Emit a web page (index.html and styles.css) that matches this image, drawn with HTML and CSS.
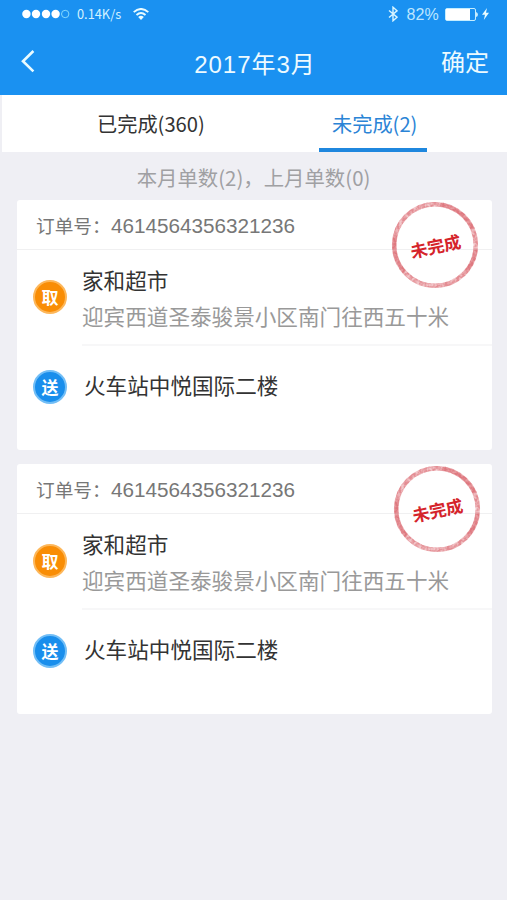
FILE: index.html
```html
<!DOCTYPE html>
<html lang="zh-CN">
<head>
<meta charset="utf-8">
<title>2017年3月</title>
<link rel="stylesheet" href="styles.css">
</head>
<body>
<svg class="defs" width="0" height="0" aria-hidden="true">
  <defs>
    <filter id="ink" x="-5%" y="-5%" width="110%" height="110%">
      <feTurbulence type="fractalNoise" baseFrequency="0.35" numOctaves="2" seed="4" result="n"/>
      <feColorMatrix in="n" type="matrix" values="0 0 0 0 0  0 0 0 0 0  0 0 0 0 0  2.4 0 0 0 -0.6" result="m"/>
      <feComposite in="SourceGraphic" in2="m" operator="in"/>
    </filter>
    <symbol id="ring" viewBox="0 0 88 88">
      <g fill="none" stroke="#d6525b">
        <circle cx="44" cy="44" r="40.8" stroke-width="4.4" opacity=".32"/>
        <g filter="url(#ink)">
          <circle cx="44" cy="44" r="40.8" stroke-width="4.6" opacity=".5"/>
        </g>
        <path d="M49 3.5A40.8 40.8 0 0 1 81 27M84.4 49A40.8 40.8 0 0 1 75 70.5M13 70.5A40.8 40.8 0 0 1 4.4 34" stroke-width="3.6" opacity=".36"/>
      </g>
    </symbol>
  </defs>
</svg>
<header class="header">
  <div class="status">
    <svg class="signal" viewBox="0 0 48 10"><g fill="#fff"><circle cx="4.4" cy="5" r="4.2"/><circle cx="14" cy="5" r="4.2"/><circle cx="24" cy="5" r="4.2"/><circle cx="33.6" cy="5" r="4.2"/></g><circle cx="43.2" cy="5" r="3.7" fill="none" stroke="#8fe0ff" stroke-width=".9"/></svg>
    <span class="speed">0.14K/s</span>
    <svg class="wifi" viewBox="0 0 16 12"><g fill="none" stroke="#e8fbff" stroke-width="1.9"><path d="M.7 4.1Q8-2.2 15.3 4.1"/><path d="M3.5 7Q8 3 12.5 7"/></g><path d="M5.2 9Q8 6.7 10.8 9L8 12Z" fill="#e8fbff"/></svg>
    <svg class="bluetooth" viewBox="0 0 10 16"><path d="M1 4.5L9 11.2 5 14.8V1.2L9 4.8 1 11.5" fill="none" stroke="#d8f5ff" stroke-width="1.4"/></svg>
    <span class="percent">82%</span>
    <svg class="battery" viewBox="0 0 33 13"><rect x=".5" y=".5" width="30" height="12" rx="1.5" fill="none" stroke="#c4edff"/><rect x="1" y="1" width="24" height="11" fill="#fff"/><path d="M31 4Q33 4.5 33 6.5T31 9Z" fill="#c4edff"/></svg>
    <svg class="bolt" viewBox="0 0 7 12"><path d="M5 0L0 6.8H3L1.8 12 7 4.8H4Z" fill="#e8fbff"/></svg>
  </div>
  <nav class="nav">
    <svg class="back" viewBox="0 0 14 24"><path d="M12.4 2L2 12.2 12.4 22.4" fill="none" stroke="#e9fbff" stroke-width="2.6"/></svg>
    <h1 class="title">2017年3月</h1>
    <span class="confirm">确定</span>
  </nav>
</header>
<div class="tabs">
  <div class="tab">已完成(360)</div>
  <div class="tab active">未完成(2)</div>
</div>
<p class="summary">本月单数(2)，上月单数(0)</p>
<main class="list">
  <section class="card">
    <div class="order"><span class="label">订单号：</span><span class="number">4614564356321236</span></div>
    <div class="row pickup">
      <span class="badge orange">取</span>
      <div class="place"><div class="name">家和超市</div><div class="address">迎宾西道圣泰骏景小区南门往西五十米</div></div>
    </div>
    <div class="row delivery">
      <span class="badge blue">送</span>
      <div class="name">火车站中悦国际二楼</div>
    </div>
    <div class="stamp"><svg class="ring"><use href="#ring"/></svg><span class="stamp-text">未完成</span></div>
  </section>
  <section class="card">
    <div class="order"><span class="label">订单号：</span><span class="number">4614564356321236</span></div>
    <div class="row pickup">
      <span class="badge orange">取</span>
      <div class="place"><div class="name">家和超市</div><div class="address">迎宾西道圣泰骏景小区南门往西五十米</div></div>
    </div>
    <div class="row delivery">
      <span class="badge blue">送</span>
      <div class="name">火车站中悦国际二楼</div>
    </div>
    <div class="stamp second"><svg class="ring"><use href="#ring"/></svg><span class="stamp-text">未完成</span></div>
  </section>
</main>
</body>
</html>
```
FILE: styles.css
```css
* { box-sizing: border-box; }
body {
  margin: 0;
  height: 900px;
  overflow: hidden;
  background: #efeff4;
  font-family: "Noto Sans CJK SC", sans-serif;
  color: #333;
}
svg { display: block; flex: none; }
.defs { position: absolute; }
.header { height: 95px; background: #1a91f1; color: #edfaff; }
.status { height: 28px; display: flex; align-items: center; padding: 0 18px 0 22px; }
.signal { width: 48px; height: 10px; }
.speed {
  margin-left: 7px;
  width: 45px;
  font-size: 12.8px;
  line-height: 28px;
  white-space: nowrap;
  color: #d3f1ff;
}
.wifi { width: 16px; height: 12px; margin-left: 11px; }
.bluetooth { width: 10px; height: 16px; margin-left: auto; }
.percent { font: 16px/28px "Liberation Sans", sans-serif; color: #bde6ff; margin: 1px 6px 0 8px; letter-spacing: .2px; }
.battery { width: 33px; height: 13px; }
.bolt { width: 7px; height: 12px; margin-left: 4px; }
.nav { height: 67px; display: grid; grid-template-columns: 80px 1fr 80px; padding: 0 18px 0 21px; }
.back { width: 14px; height: 24px; margin-top: 21px; }
.title {
  margin: 0;
  padding-top: 3px;
  text-align: center;
  font: 400 24px/67px "Liberation Sans", "Noto Sans CJK SC", sans-serif;
  letter-spacing: 1px;
}
.confirm { font-size: 24px; line-height: 66px; text-align: right; }
.tabs { height: 57px; margin-left: 2px; display: flex; justify-content: space-between; background: #fff; padding: 0 80px 0 95px; }
.tab { height: 57px; font-size: 20.2px; line-height: 57px; white-space: nowrap; }
.tab.active { width: 108px; padding-left: 13px; color: #2b84d6; border-bottom: 4px solid #1f87de; }
.summary { margin: 0; height: 48px; font-size: 20.4px; line-height: 50px; text-align: center; color: #a0a0a3; white-space: nowrap; }
.list { display: flex; flex-direction: column; gap: 14px; padding: 0 15px 0 17px; }
.card { position: relative; height: 250px; background: #fff; border-radius: 3px; }
.order { height: 50px; display: flex; align-items: center; padding-left: 19px; border-bottom: 1px solid #f0f0f1; color: #777; }
.label { width: 75px; font-size: 18.7px; line-height: 49px; margin-top: -1px; white-space: nowrap; }
.number { font: 20.7px/49px "Liberation Sans", sans-serif; margin-top: 1px; }
.row { display: flex; }
.row .name { font-size: 21.6px; line-height: 36px; }
.pickup { height: 96px; padding-left: 16px; }
.place { flex: 1; margin-left: 15px; padding-top: 12px; border-bottom: 2px solid #f7f7f8; }
.address { font-size: 21.6px; line-height: 36px; color: #999; white-space: nowrap; }
.pickup .badge { margin-top: 30px; }
.delivery { height: 84px; align-items: center; padding-left: 16px; }
.delivery .badge { margin-top: -2px; }
.delivery .name { margin-left: 17px; margin-top: -6px; }
.badge {
  flex: none;
  width: 34px;
  height: 34px;
  border: 2.5px solid;
  border-radius: 50%;
  color: #fff;
  font-size: 17px;
  font-weight: 700;
  line-height: 29px;
  text-align: center;
}
.orange { background: #f98d05; border-color: #fdb75a; }
.blue { background: #198eec; border-color: #72bef6; }
.stamp { position: absolute; left: 374px; top: 1px; width: 88px; height: 88px; display: grid; place-items: center; }
.stamp.second { left: 376px; }
.stamp .ring { grid-area: 1 / 1; width: 88px; height: 88px; }
.stamp-text { grid-area: 1 / 1; margin-top: 2px; font-size: 17px; font-weight: 700; line-height: 24px; color: #d5242b; transform: rotate(-12deg); }
```
